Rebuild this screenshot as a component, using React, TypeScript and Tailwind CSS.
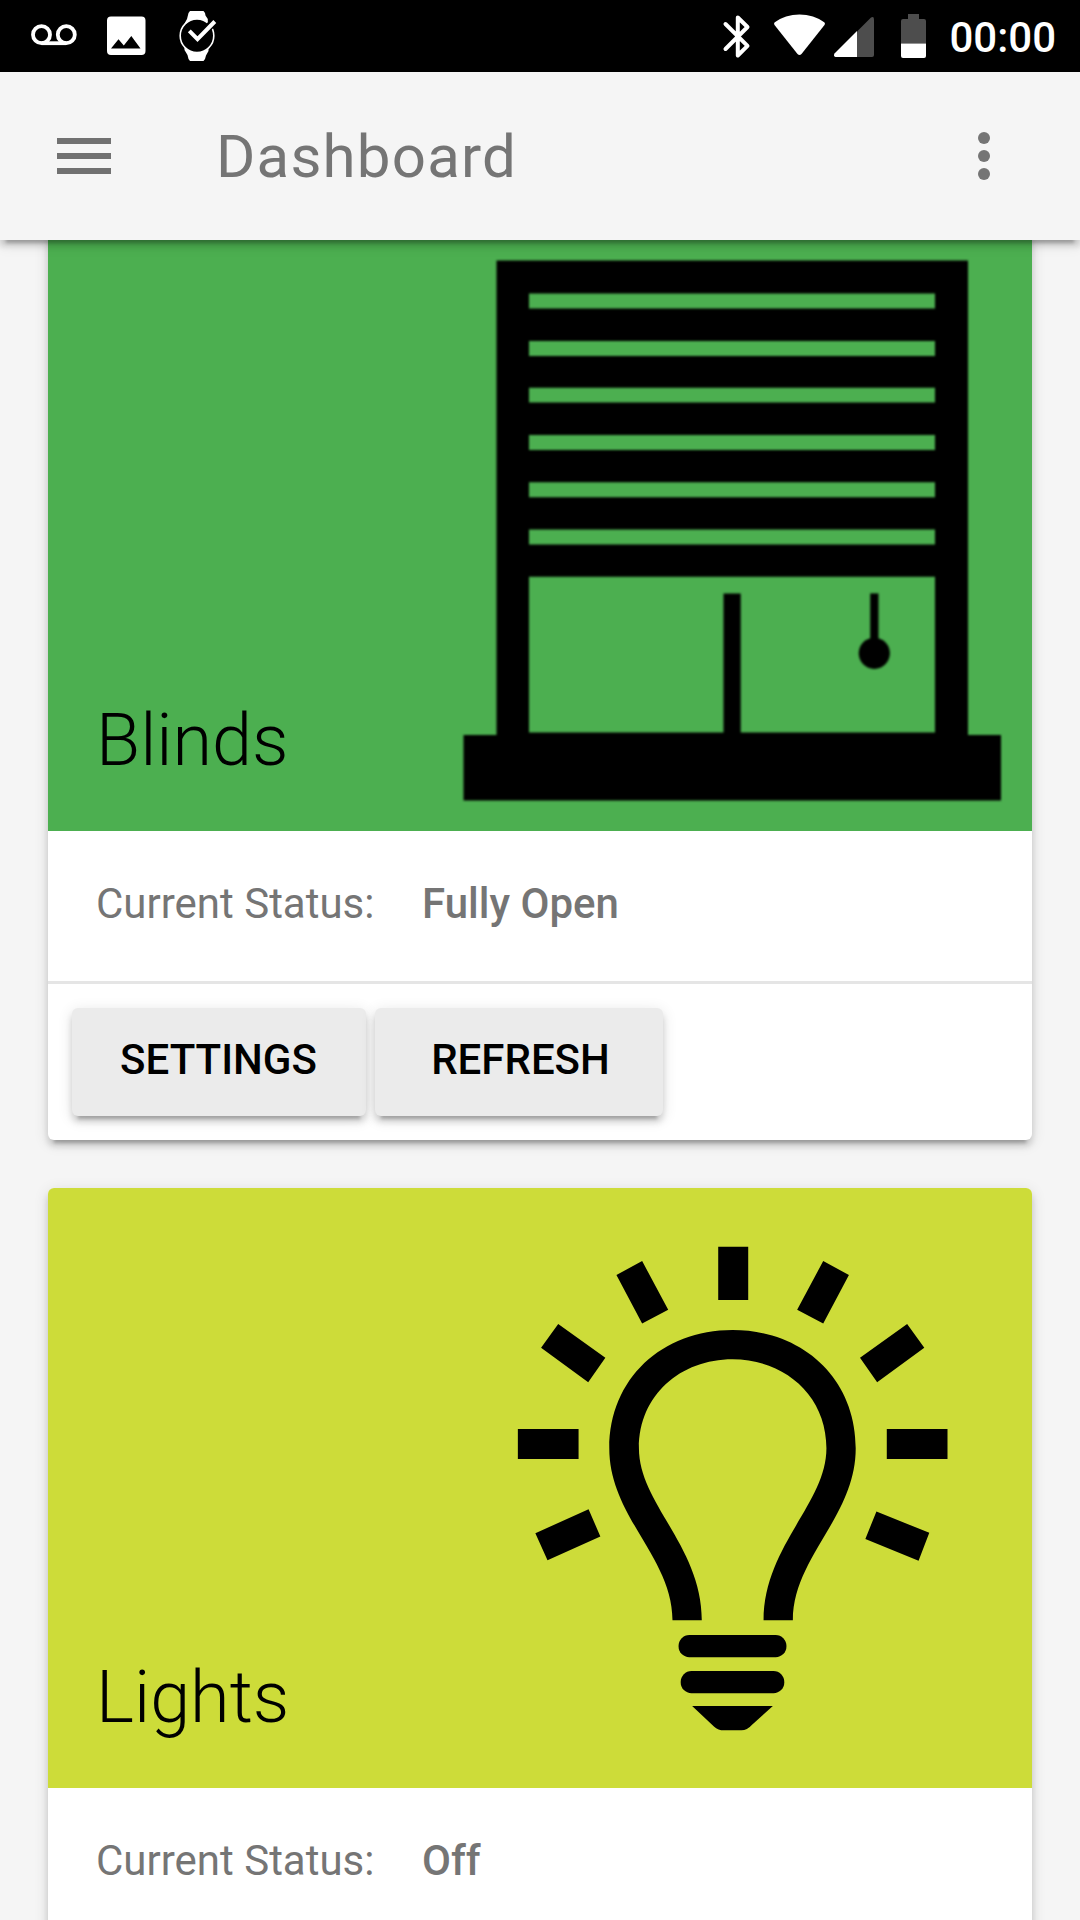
import type { ReactNode } from "react";

const CARD_SHADOW =
  "shadow-[0_6px_6px_0_rgba(0,0,0,0.14),0_9px_3px_-6px_rgba(0,0,0,0.2),0_3px_15px_0_rgba(0,0,0,0.12)]";

function StatusBar() {
  return (
    <div className="flex h-[72px] shrink-0 items-start bg-black text-white">
      <svg className="ml-[24px] h-[72px] w-[204px]" viewBox="24 0 204 72" fill="currentColor">
        <g fill="none" stroke="currentColor" strokeWidth="3.8">
          <circle cx="41.5" cy="34.7" r="8.5" />
          <circle cx="66.3" cy="34.7" r="8.5" />
          <path d="M41.5 43.2H66.3" />
        </g>
        <path
          fillRule="evenodd"
          d="M111 16.5h30.500a4 4 0 0 1 4 4v30.500a4 4 0 0 1-4 4h-30.500a4 4 0 0 1-4-4v-30.500a4 4 0 0 1 4-4zM111 48.500h29.500l-9.200-12.500-7.500 9.500-5.300-6.300z"
        />
        <path d="M190 11h13.500l1.500 2 .5 2.500 2.300 3.500v8h-23v-4l2.200-4 1.500-6zM184.500 46h24v5l-2.500 4.500-1 3.500-1.500 2h-13.500l-1.500-2-1-4-3-5z" />
        <circle cx="197" cy="35.800" r="16.800" className="fill-black stroke-white" strokeWidth="1.600" />
        <path fill="none" className="stroke-black" strokeWidth="8" d="M203 33l12.500-13" />
        <path fill="none" stroke="currentColor" strokeWidth="4" d="M189.300 30.800l8.200 8.400 17.300-17.700" />
      </svg>
      <div className="flex-1" />
      <svg className="mr-[22px] h-[72px] w-[207px]" viewBox="720 0 207 72" fill="currentColor">
        <path
          fill="none"
          stroke="currentColor"
          strokeWidth="4"
          strokeLinecap="round"
          strokeLinejoin="round"
          d="M725.500 24l22 21.800-9.700 9.700v-38l9.700 9.500-22 22"
        />
        <path d="M774.500 22.500C788 11.700 811 11.700 824.500 22.500q1 1 0 2.500l-23 29q-2 2-4 0l-23-29q-1-1.500 0-2.500z" />
        <path fill="#4d4d4d" d="M857 31.500l14-14q3-1.500 3 2v35.500q0 2-2 2h-15z" />
        <path d="M857 31v26h-21.500q-2.500-1-1-3.500z" />
        <path fill="#4d4d4d" d="M908 14h11v5h5q2 0 2 2v22.500h-25v-22.500q0-2 2-2h5z" />
        <path d="M901 43.500h25v12.500q0 2-2 2h-21q-2 0-2-2z" />
      </svg>
      <span className="mr-[24px] mt-[13px] text-[42px] font-medium leading-[50px]">00:00</span>
    </div>
  );
}

function AppBar() {
  return (
    <header
      className={`relative z-10 flex h-[168px] shrink-0 items-center bg-[#f5f5f5] text-[#757575] ${CARD_SHADOW}`}
    >
      <button className="ml-[57px] flex flex-col gap-[9px]" aria-label="Menu">
        <span className="h-[6px] w-[54px] bg-[#717171]" />
        <span className="h-[6px] w-[54px] bg-[#717171]" />
        <span className="h-[6px] w-[54px] bg-[#717171]" />
      </button>
      <h1 className="ml-[105px] flex-1 pt-[2px] text-[60px] leading-[72px] tracking-[1.2px]">Dashboard</h1>
      <button className="mr-[90px] flex flex-col gap-[6px]" aria-label="More">
        <span className="size-[12px] rounded-full bg-[#757575]" />
        <span className="size-[12px] rounded-full bg-[#757575]" />
        <span className="size-[12px] rounded-full bg-[#757575]" />
      </button>
    </header>
  );
}

function BlindsArt() {
  return (
    <svg
      className="absolute left-[412px] top-[24px] h-[550px] w-[545px] blur-[1.2px]"
      viewBox="460 255 545 550"
    >
      <path
        fillRule="evenodd"
        d="M496.500 260.500H968V735h33v65.500H463.500V735h33zM529 576.800V732.600H723.500V593.500h17.200V732.600H935V576.800zM529 293.500V308.500H935V293.500zM529 341V356H935V341zM529 387.800V402.600H935V387.800zM529 434.900V449.900H935V434.900zM529 482.300V497.300H935V482.300zM529 529.500V544.500H935V529.500z"
      />
      <path d="M870.200 593.400h8.300V640h-8.300z" />
      <circle cx="874.300" cy="653.300" r="15.600" />
    </svg>
  );
}

function BulbArt() {
  return (
    <svg className="absolute left-[462px] top-[52px] h-[500px] w-[440px]" viewBox="84 112 1232 1400">
      <path d="M667 131h84v149h-84zM454 171l73 136-73 39-72-136zM961 171l72 39-72 136-73-39zM219 347l132 95-48 68-132-96zM1196 347l48 67-132 96-48-68zM106 641h170v84h-170zM1139 641h170v84h-170zM304 866l33 76-148 67-34-76zM1110 872l148 60-30 78-149-61z" />
      <path d="M539 1177C539 1000 362 887 362 695C362 501 509 364 707 364S1052 501 1052 695C1052 887 876 1000 876 1177H794C794 970 970 850 970 695C970 546 852 446 707 446S445 546 445 695C445 850 621 970 621 1177z" />
      <rect x="556" y="1218" width="302" height="62" rx="30" />
      <rect x="562" y="1319" width="290" height="62" rx="30" />
      <path d="M594 1417H820L761 1470Q748 1485 732 1485H683Q667 1485 655 1474z" />
    </svg>
  );
}

function ActionButton({ label, className }: { label: string; className: string }) {
  return (
    <button
      className={`h-[108px] rounded-[6px] bg-[#ebebeb] pb-[5px] text-[42px] font-medium uppercase leading-[103px] text-black ${className} ${CARD_SHADOW}`}
    >
      {label}
    </button>
  );
}

type CardProps = {
  title: string;
  status: string;
  color: string;
  art: ReactNode;
  actions?: ReactNode;
};

function DeviceCard({ title, status, color, art, actions }: CardProps) {
  return (
    <section className={`flex shrink-0 flex-col rounded-[6px] bg-white ${CARD_SHADOW}`}>
      <div className={`relative flex h-[600px] items-end rounded-t-[6px] px-[48px] pb-[48px] ${color}`}>
        {art}
        <h2 className="text-[72px] font-light leading-[84px] text-black">{title}</h2>
      </div>
      <div className="flex h-[150px] items-center px-[48px] pb-[4px] text-[42px] leading-[54px] text-[#757575]">
        <span className="w-[326px]">Current Status:</span>
        <span className="font-medium">{status}</span>
      </div>
      {actions && (
        <div className="flex h-[159px] items-center gap-[9px] border-t-[3px] border-[#e5e5e5] px-[24px]">
          {actions}
        </div>
      )}
    </section>
  );
}

export default function App() {
  return (
    <div className="flex h-[1920px] w-[1080px] flex-col overflow-hidden bg-[#f5f5f5] font-['Roboto',sans-serif]">
      <StatusBar />
      <AppBar />
      <main className="-mt-[9px] flex min-h-0 flex-1 flex-col gap-[48px] px-[48px]">
        <DeviceCard
          title="Blinds"
          status="Fully Open"
          color="bg-[#4caf50]"
          art={<BlindsArt />}
          actions={
            <>
              <ActionButton label="Settings" className="w-[294px] pr-[1px]" />
              <ActionButton label="Refresh" className="w-[288px] pl-[3px]" />
            </>
          }
        />
        <DeviceCard title="Lights" status="Off" color="bg-[#cddc39]" art={<BulbArt />} />
      </main>
    </div>
  );
}
